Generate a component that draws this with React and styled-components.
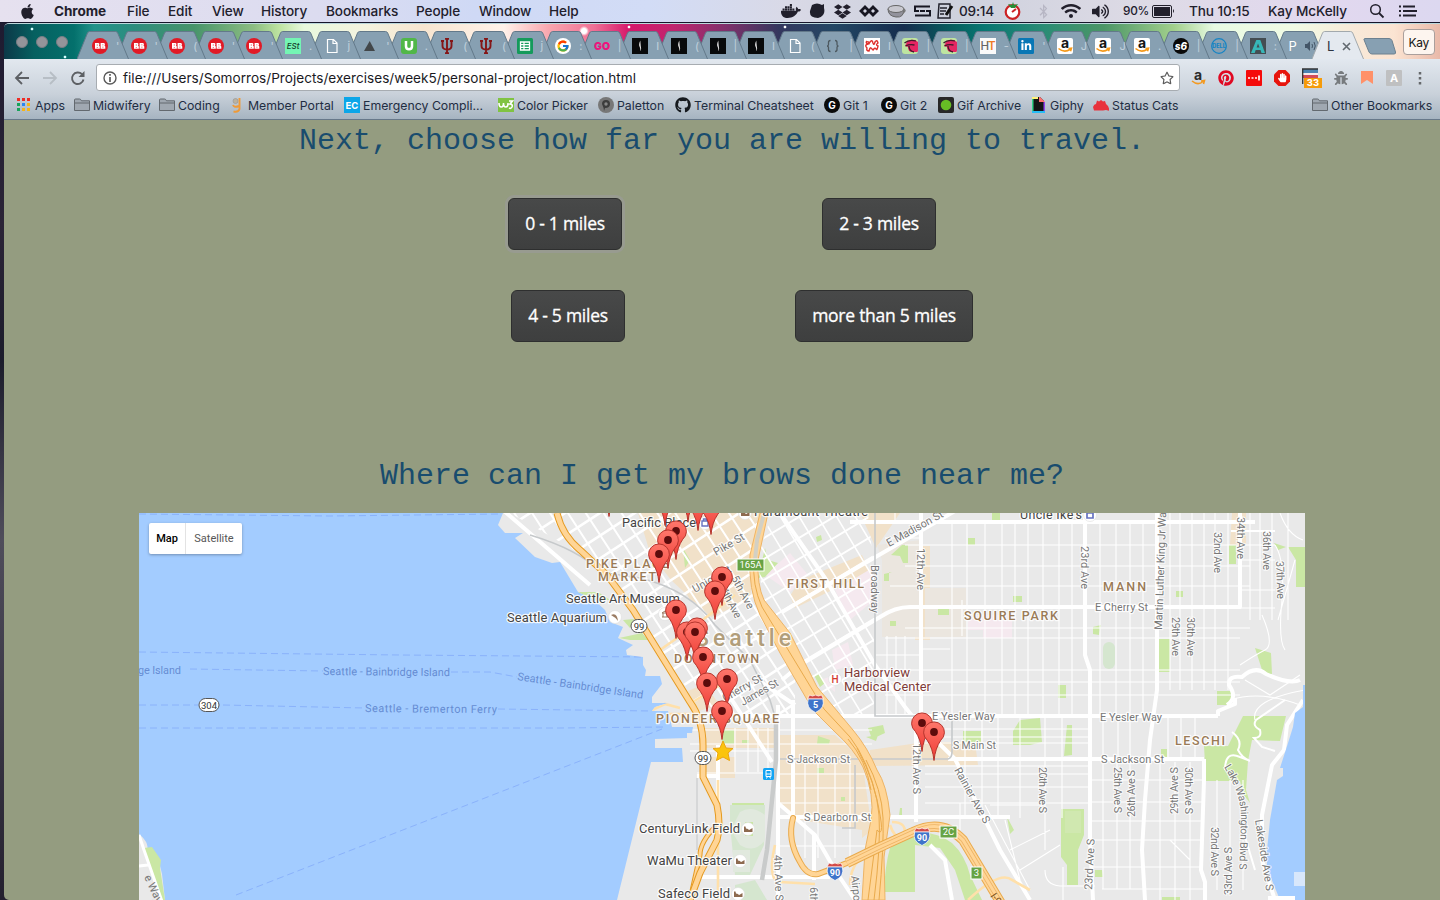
import React from "react";
import styled, { createGlobalStyle } from "styled-components";
import {
  FaApple, FaDocker, FaDropbox, FaWifi, FaBluetoothB, FaGithub,
  FaPinterest, FaHandPaper, FaBug, FaVolumeUp, FaRegStar, FaLinkedinIn,
} from "react-icons/fa";
import { FcGoogle } from "react-icons/fc";

const GlobalStyle = createGlobalStyle`
  * { box-sizing: border-box; }
  html, body { margin: 0; height: 100%; overflow: hidden; }
  body { font-family: Inter, "Liberation Sans", sans-serif; background: #231d33; }
  #root { height: 100%; }
  svg { display: block; flex: none; }
`;

const Desktop = styled.div`
  height: 900px;
  width: 1440px;
  display: flex;
  flex-direction: column;
  overflow: hidden;
  background: linear-gradient(#1d1a30, #2b2437 25%, #1c1c2c 40%, #4f4d5b 60%, #24202f);
`;

/* ---------- system menu bar ---------- */

const MenuBar = styled.header`
  height: 23px;
  flex: none;
  display: flex;
  align-items: center;
  background: linear-gradient(90deg, #e6e1ef, #dcdcf0 22%, #cfd9f5 33%, #d2dcf6 45%, #d9d9e6 55%, #ccd0dc 65%, #dedbe6 80%, #e2d8ef 92%, #dcd8f0);
  border-bottom: 1px solid #17152a;
  color: #22202c;
  white-space: nowrap;
`;

const MenuItem = styled.span`
  flex: none;
  width: ${(p) => p.$w}px;
  padding-left: ${(p) => p.$pad || 0}px;
  display: flex;
  align-items: center;
  height: 22px;
  font-weight: ${(p) => (p.$bold ? 700 : 500)};
  font-size: ${(p) => p.$size || 13.6}px;
  letter-spacing: ${(p) => p.$ls || -0.1}px;
  color: ${(p) => p.$color || "inherit"};
`;

/* ---------- browser window ---------- */

const Window = styled.div`
  margin: 0 0 0 4px;
  flex: 1;
  min-height: 0;
  display: flex;
  flex-direction: column;
  border-radius: 5px 0 0 5px;
  overflow: hidden;
  border-top: 1px solid #bcd8dc;
`;

const TabStrip = styled.div`
  height: 35px;
  flex: none;
  display: flex;
  align-items: flex-end;
  background:
    radial-gradient(circle 3px at 28px 5px, #d8ffff 25%, transparent 60%),
    radial-gradient(circle 3px at 61px 33px, #d8ffff 25%, transparent 60%),
    radial-gradient(circle 5px at 580px 7px, #fff 50%, transparent 100%),
    radial-gradient(circle 3px at 625px 3px, #fff 25%, transparent 60%),
    radial-gradient(circle 3px at 781px 3px, #fff 25%, transparent 60%),
    linear-gradient(90deg, #0c3848 0, #066060 30px, #04706c 70px, #21938a 90px, #2d8d7e 130px, #47946a 190px, #8dbd82 250px, #bde3a0 275px, #e8f8dd 300px, #f4f3df 360px, #f7e5d0 420px, #fff2ea 500px, #f9a6ae 545px, #ef7095 590px, #d6186b 625px, #c0256e 670px, #82306c 720px, #34375e 775px, #234764 830px, #152d4e 900px, #06605f 950px, #077672 980px, #2a8c75 1040px, #4c9667 1100px, #a2cf8c 1170px, #e8fae3 1210px, #f1fbe5 1290px, #f8e9d8 1350px, #fbe4d2 1390px, #e9b9a9 1436px);
`;

const WindowDots = styled.div`
  width: 73px;
  height: 35px;
  flex: none;
  display: flex;
  align-items: center;
  gap: 8px;
  padding: 0 0 0 12px;
`;

const Dot = styled.span`
  width: 12px;
  height: 12px;
  border-radius: 50%;
  background: #94949a;
  border: 1px solid #797d84;
`;

const Tab = styled.div`
  width: 52px;
  height: 28px;
  flex: none;
  margin-right: -13.42px;
  position: relative;
  z-index: ${(p) => p.$z};
  display: grid;
  > * { grid-area: 1 / 1; }
`;

const TabBody = styled.div`
  display: flex;
  align-items: center;
  gap: 8px;
  padding: 2px 0 0 15px;
`;

const TabHint = styled.span`
  font-size: 11px;
  color: #dbe5ee;
  opacity: 0.7;
  white-space: nowrap;
`;

const TabText = styled.span`
  font-size: 13px;
  color: ${(p) => (p.$active ? "#2b3340" : "#fff")};
`;

const NewTab = styled.div`
  width: 52px;
  height: 28px;
  flex: none;
  padding: 7px 0 0 12px;
`;

const ProfileButton = styled.div`
  margin: 0 5px 4px auto;
  width: 35px;
  height: 26px;
  display: flex;
  align-items: center;
  justify-content: center;
  border: 1px solid #aa9f9c;
  border-radius: 4px;
  background: #fdf5ef;
  font-size: 12px;
  letter-spacing: -0.3px;
  color: #151515;
`;

const Toolbar = styled.div`
  height: 35px;
  flex: none;
  display: flex;
  align-items: center;
  padding-top: 2px;
  background: linear-gradient(#e2e8ef, #c9d1da);
`;

const NavButtons = styled.div`
  width: 92px;
  display: flex;
  gap: 12px;
  padding-left: 10px;
`;

const AddressBar = styled.div`
  width: 1084px;
  height: 27px;
  flex: none;
  display: flex;
  align-items: center;
  padding: 0 5px 0 6px;
  gap: 6px;
  background: #fff;
  border: 1px solid #a7acb1;
  border-radius: 3px;
  color: #1a1a1f;
`;

const Url = styled.span`
  flex: 1;
  font-size: 13.6px;
  letter-spacing: 0.01px;
`;

const Extensions = styled.div`
  display: flex;
  align-items: center;
  gap: 12px;
  padding-left: 10px;
`;

const BookmarkBar = styled.div`
  height: 26px;
  flex: none;
  display: flex;
  align-items: center;
  padding: 0 0 3px 13px;
  background: linear-gradient(#c9d1da, #a6b4c1);
  border-bottom: 1px solid #67788a;
`;

const Bookmark = styled.span`
  flex: none;
  width: ${(p) => p.$w}px;
  margin-left: ${(p) => p.$ml || 0}px;
  display: flex;
  align-items: center;
  gap: ${(p) => p.$gap || 3}px;
  font-size: 12.3px;
  color: #1f2d42;
  white-space: nowrap;
`;

/* ---------- page ---------- */

const Page = styled.main`
  flex: 1;
  min-height: 0;
  background: #949c80;
  display: flex;
  flex-direction: column;
  align-items: center;
`;

const Heading = styled.h2`
  margin: ${(p) => p.$top}px 0 0;
  font: 400 30px/34px "Liberation Mono", monospace;
  color: #194c6e;
  white-space: pre;
`;

const ButtonRow = styled.div`
  margin-top: ${(p) => p.$top}px;
  display: flex;
  gap: ${(p) => p.$gap}px;
  width: 1436px;
  padding-left: ${(p) => p.$left}px;
`;

const MileButton = styled.button`
  width: ${(p) => p.$w}px;
  height: 52px;
  padding: 0 0 2px;
  border: 1px solid #2e2f2f;
  border-radius: 6px;
  background: linear-gradient(#484949, #3e3f3f);
  box-shadow: ${(p) => (p.$focused ? "0 0 0 3px rgba(155, 155, 155, 0.6)" : "none")};
  color: #fff;
  font: 500 17.5px "Open Sans", sans-serif;
  -webkit-text-stroke: 0.3px #fff;
  letter-spacing: -0.25px;
`;

const MapFrame = styled.section`
  width: 1166px;
  height: 387px;
  margin-top: 20px;
  display: grid;
  overflow: hidden;
  > * { grid-area: 1 / 1; }
`;

const MapTypeControl = styled.div`
  align-self: start;
  justify-self: start;
  margin: 10px;
  height: 31px;
  display: flex;
  z-index: 1;
  background: #fff;
  border-radius: 2px;
  box-shadow: 0 1px 3px rgba(0, 0, 0, 0.3);
  font: 11px/31px Roboto, sans-serif;
`;

const MapType = styled.span`
  width: ${(p) => p.$w}px;
  text-align: center;
  font-weight: ${(p) => (p.$active ? 500 : 400)};
  color: ${(p) => (p.$active ? "#000" : "#565656")};
  border-left: ${(p) => (p.$active ? "none" : "1px solid #e3e3e3")};
`;

/* ---------- icons ---------- */

const T = ({ children, x = 8, y = 12, s = 10, c = "#fff", w = 700, f = "Inter", ...r }) => (
  <text x={x} y={y} fontSize={s} fill={c} fontWeight={w} fontFamily={f} textAnchor="middle" {...r}>{children}</text>
);
const Ico = ({ children, w = 16, h = 16 }) => (
  <svg width={w} height={h} viewBox={`0 0 ${w} ${h}`}>{children}</svg>
);

const favicons = {
  rb: (
    <Ico><circle cx="8" cy="8" r="8" fill="#e11a26" />
      <path d="M3 5h3.4q1.3.3 1 1.6l-.4.9.8 1v2.3H3zM8.6 5H12q1.3.4.9 1.8l-.4.7.8 1v2.3H8.6z" fill="#fff" />
      <path d="M4.8 6.5h.9v1h-.9zM4.8 9h.9v.8h-.9zM10.4 6.5h.9v.8h-.9zM10.4 8.8h1v.8h-1z" fill="#e11a26" /></Ico>
  ),
  est: (
    <Ico><path d="M0 0h16v16H0z" fill="#74f5b4" /><T s={8} w={500} y={11} c="#173d2b" fontStyle="italic">ESt</T></Ico>
  ),
  file: (
    <Ico><path d="M3.500 1.500h6l3.500 3.500v9.500h-9.500zM9 1.800v3.700h3.800" fill="none" stroke="#fff" strokeWidth="1.200" /></Ico>
  ),
  tri: <Ico><path d="M2 13L7.700 3L13 13z" fill="#42474a" /></Ico>,
  u: <Ico><rect width="16" height="16" rx="3" fill="#51b748" /><path d="M5 3v5.300q0 3 3 3t3-3V3" stroke="#fff" strokeWidth="2.500" fill="none" /></Ico>,
  iu: <Ico><path d="M2 3h3M11 3h3M8 0v16M6 .8h4M6 15.200h4M3.500 3v5q0 3.500 4.500 3.500t4.500-3.500V3" stroke="#841617" strokeWidth="1.900" fill="none" /></Ico>,
  sheets: <Ico><rect width="16" height="16" rx="1.500" fill="#149a5b" /><path d="M3.500 4h9v8h-9zM3.500 6.700h9M3.500 9.300h9M7 4v8" fill="none" stroke="#fff" strokeWidth="1.300" /></Ico>,
  google: <Ico><circle cx="8" cy="8" r="8" fill="#fff" /><g transform="translate(1.300 1.300)"><FcGoogle size={13.400} /></g></Ico>,
  go: <Ico><T s={10.500} w={900} c="#ee147d">GO</T></Ico>,
  black: <Ico><path d="M0 0h16v16H0z" fill="#080a0b" /><path d="M8.300 2.500q-2 4-.6 6.500t.2 4.500q2-3 .8-6z" fill="#e8e8e8" /></Ico>,
  braces: <Ico><path d="M5.500 2.500q-2 0-2 2v2q0 1.500-1.500 1.500 1.500 0 1.500 1.500v2q0 2 2 2M10 2.500q2 0 2 2v2q0 1.500 1.500 1.500-1.500 0-1.500 1.500v2q0 2-2 2" fill="none" stroke="#4d5960" strokeWidth="1.300" /></Ico>,
  squig: <Ico><path d="M0 0h16v16H0z" fill="#fff" /><path d="M3 3q-2 2 1 3-4 1-1 4-1 3 2 3 1-4 2-3t2 2q2-3 3-1t2-3q-3-1 0-3-1-4-3-1-1 4-2 1-1-4-3-1t-2-1" fill="none" stroke="#df312d" strokeWidth="1.400" /></Ico>,
  pink: <Ico><rect width="16" height="16" rx="3" fill="#bee5a0" /><path d="M13 2Q6 1 4 6l-1 2 3 1q0 5 4 5h5q1 0 1-2V4z" fill="#e52663" /><path d="M2.500 5Q7 1 14 3M3.500 8q4-2 9-1M7 8q0 5 5 6" fill="none" stroke="#411b2b" strokeWidth="1.300" /></Ico>,
  ht: <Ico><path d="M0 0h16v16H0z" fill="#fafafa" /><T x={4.800} s={11.500} w={500} c="#666">H</T><T x={11.800} s={11.500} w={600} c="#ee7a29">T</T></Ico>,
  li: <Ico><rect width="16" height="16" rx="1.500" fill="#0877b5" /><g transform="translate(2.500 2)"><FaLinkedinIn size={11.500} color="#fff" /></g></Ico>,
  amazon: <Ico><rect width="16" height="16" rx="2" fill="#fff" /><T s={14} y={10} c="#151515">a</T><path d="M1.500 10.500q6 5 12 .5M11.500 10.500l3-.3-1 3" stroke="#f59a1b" strokeWidth="1.600" fill="none" /></Ico>,
  s6: <Ico><circle cx="8" cy="8" r="8" fill="#090909" /><T s={10} w={800} fontStyle="italic">s6</T></Ico>,
  dell: <Ico><circle cx="8" cy="8" r="7.300" fill="none" stroke="#1684c4" strokeWidth="1.300" /><T s={5.500} y={10} c="#1684c4" w={800}>DELL</T></Ico>,
  a: <Ico><path d="M0 0h16v16H0z" fill="#444d52" /><path d="M1 15L6.300 2h4L15 15h-3.500l-1-3H5.700l-1 3zM8 5.500L6.600 9.500h3z" fill="#37b6b7" /></Ico>,
};

const tabs = [
  "rb", "rb", "rb", "rb", "rb", "est", "file", "tri", "u", "iu", "iu", "sheets", "google", "go",
  "black", "black", "black", "black", "file", "braces", "squig", "pink", "pink", "ht", "li",
  "amazon", "amazon", "amazon", "s6", "dell", "a",
];
const hints = ["'", "'", "(", "'", "'", ".", "j", "'", ".", "(", "(", "j", ":", "|", "I", "(", "|", "I", "(", "|", "I", "|", "|", "-", "'", "J", "J", ".", "|", "|", ":"];

const TabShape = ({ active }) => (
  <svg width="52" height="28" viewBox="0 0 52 28">
    <path d="M0 28L10.500 2Q11.300.5 12.500.5H38.500Q40 .5 40.700 2L51.500 28" fill={active ? "#e4e9ef" : "#87a0b2"} stroke={active ? "#a2a9ad" : "#63798a"} strokeWidth="1" />
  </svg>
);

const Folder = () => (
  <Ico><path d="M.5 13.500V3q0-1 1-1h4q1 0 1.500 1l.5.800h8v9.700zM.8 6h14.700" fill="#a0a8b1" stroke="#63696f" /></Ico>
);
const AppsIcon = () => (
  <Ico w={13} h={14}>
    {["#ee2c24", "#ee2c24", "#ee2c24", "#17a35b", "#2a86f0", "#f5b417", "#17a35b", "#f5b417", "#f5b417"].map((c, i) => (
      <rect key={i} x={(i % 3) * 5} y={Math.floor(i / 3) * 5} width="3" height="3" fill={c} />
    ))}
  </Ico>
);
const GBadge = () => <Ico><circle cx="8" cy="8" r="8" fill="#0b0b0b" /><T s={10} y={11.600}>G</T></Ico>;

const bookmarks = [
  { w: 57, t: "Apps", gap: 5, i: <AppsIcon /> },
  { w: 85, t: "Midwifery", i: <Folder /> },
  { w: 73, t: "Coding", i: <Folder /> },
  { w: 112, t: "Member Portal", gap: 7, i: <Ico w={9}><circle cx="3.500" cy="4" r="2.500" fill="#bbb2a0" stroke="#999" strokeWidth=".7" /><path d="M7.500 1v11q-1 3.500-6 2.500M1 8q1 3 6 1" stroke="#ef9a37" strokeWidth="1.900" fill="none" /></Ico> },
  { w: 154, t: "Emergency Compli...", i: <Ico><path d="M0 0h16v16H0z" fill="#0ca6e8" /><T s={9.500} y={11.500}>EC</T></Ico> },
  { w: 100, t: "Color Picker", i: <Ico><rect y="1" width="16" height="14" fill="#80c342" /><path d="M1 6q0 4 2.300 4T5.500 6q0 4 2.300 4T10 6M11 4h3.500L12 7q3 0 2 3-1 2-3 1" fill="none" stroke="#fff" strokeWidth="1.600" /></Ico> },
  { w: 77, t: "Paletton", i: <Ico><circle cx="8" cy="8" r="8" fill="#777" /><path d="M8 3q4 0 4 4t-5 4l-1 3q0-3-2-7 0-4 4-4z" fill="#3c3c3c" /><circle cx="8" cy="7" r="1.700" fill="#888" /></Ico> },
  { w: 149, t: "Terminal Cheatsheet", i: <FaGithub size={16} color="#161a1e" /> },
  { w: 57, t: "Git 1", i: <GBadge /> },
  { w: 57, t: "Git 2", i: <GBadge /> },
  { w: 94, t: "Gif Archive", i: <Ico><rect width="16" height="16" rx="2" fill="#282828" /><circle cx="8" cy="8" r="5.300" fill="#67bd25" /></Ico> },
  { w: 61, t: "Giphy", gap: 5, i: <Ico w={13}><path d="M1 0h7l4 4v11H1z" fill="#151515" /><path d="M0 0h6v2H0z" fill="#fff279" /><path d="M0 2h1.500v12H0z" fill="#31d287" /><path d="M7 0h1l5 5H7z" fill="#ff7070" /><path d="M11.500 5h1.500v9h-1.500z" fill="#9142ee" /><path d="M0 14h13v2H0z" fill="#26bcf5" /></Ico> },
  { w: 90, t: "Status Cats", i: <Ico><path d="M0 10q1-3 3-3l1-3.500 2 1 2-1.500 2 1.500 2-.5 1 3 2 2 2 5-4-1-3 .5H1z" fill="#e8323c" /></Ico> },
];

/* ---------- map drawing ---------- */

const LAND = "M503 513L498 525L505 533H523L515 538L535 557L552 563L560 562L578 592L593 599L605 610L610 622L623 627L618 638L633 645L626 650L627 655L643 657V665L646 670L645 676H660L662 684L652 697V703H668L655 707L652 711H668L672 727H693L692 733H687V738L655 739V748H682L683 762H651L617 900H1305V513Z";

const hLines = (ys, x1, x2) => ys.map((y) => `M${x1} ${y}H${x2}`).join("");
const vLines = (xs, y1, y2) => xs.map((x) => `M${x} ${y1}V${y2}`).join("");
const range = (a, b, s) => Array.from({ length: Math.floor((b - a) / s) + 1 }, (_, i) => a + i * s);

const minor = [
  hLines([545, 566, 586, 628], 905, 1250),
  hLines([638, 670, 682, 695], 885, 1240),
  hLines([655], 876, 921), hLines([649], 921, 950),
  hLines([729, 737, 743], 925, 1090),
  hLines([766, 774, 787, 803], 925, 1090),
  hLines([780, 802, 821, 840, 867], 1091, 1203),
  hLines([889], 1102, 1205),
  vLines([952, 967, 985, 1002, 1015, 1028, 1043, 1059, 1072], 524, 716),
  vLines([896, 905, 887], 636, 716),
  vLines([965, 982, 998, 1020, 1045, 1062], 716, 818),
  vLines([1100, 1116, 1130, 1143], 524, 716),
  vLines([1170, 1180, 1192, 1204, 1215, 1228], 513, 690),
  vLines([1103, 1117, 1130], 762, 889),
  vLines([1160, 1175, 1190], 762, 900),
  vLines([1217, 1230, 1243], 780, 890),
  vLines([1103, 1118, 1130, 1168, 1181, 1195], 718, 758),
  vLines([805, 818, 835, 850], 760, 858),
  hLines([730, 744, 774, 788, 803, 846], 780, 872),
  vLines([1250, 1260, 1272, 1288], 513, 620),
  hLines([545, 560, 590, 608], 1240, 1275),
  hLines([730, 744, 751], 690, 776), vLines([735, 748, 758, 768], 728, 772),
  hLines([773], 697, 776),
  "M895 513V522M940 513V522M1070 513V522M962 600V636M885 538H921M890 586H921M1280 513Q1288 535 1303 540M1275 545Q1285 560 1282 600Q1278 640 1285 650M1295 560L1278 620M1262 615Q1275 645 1265 650T1240 665M1245 680L1270 695L1300 675M1230 700Q1260 690 1300 705M1255 720Q1250 700 1305 690",
  "M1005 820L1020 880M985 805L1030 890M1010 850L1050 830M1020 870L1060 845M960 803V830M990 805H1045V850M1170 840L1190 860M1045 870Q1045 885 1060 886H1095M1063 867V900",
].join("");

const major = [
  hLines([522], 850, 1255), hLines([716], 735, 1218), "M1218 716V711L1235 704V698", hLines([759], 948, 1204), "M1204 759V780L1201 870L1205 882V900",
  hLines([817], 780, 1010), "M921 513V716M916 720V822",
  "M1240 513V607H910Q895 607 880 617L800 665L782 680",
  "M1085 513V655L1090 670V840L1093 900M1157 513V690L1150 740L1145 800L1142 850L1145 900",
  "M955 511L860 566L782 612", "M780 513L825 578L875 665L905 707L917 722L955 759L1000 850L1030 900",
  "M793 700V820M718 745V810M778 803L815 835L835 870L855 900M778 705V900M700 877H830",
  "M732 700L772 762M755 678L795 705M697 776H720",
  "M930 845L945 860L952 900M814 833V880",
].join("");

const SR99 = "M557 513Q562 535 580 550L607 575L633 610L690 702Q703 720 703 745V777L717 805Q721 825 717 840L700 873L690 900";
const I5 = "M760 513L750 555Q748 590 760 615L780 653L813 710L833 730Q855 750 863 767Q875 795 871 820L865 850L862 900H885L884 857L890 815Q887 785 877 770Q868 748 853 730L817 687L790 633L764 600Q757 585 758 560L768 513Z";
const I5_LANES = "M764 513L754 560Q752 585 762 607L787 648L824 709L850 737Q868 760 877 800T877 830L868 900M857 748Q877 785 879 815T874 900M866 760Q882 790 883 818T879 900M848 739Q866 760 871 790";
const I90 = "M847 863L880 847L913 832Q942 818 963 840L975 860L1002 905";

const BROWN = "#9a7a56";
/* text, x, y, length, size, colour, weight */
const labels = [
  ["Pacific Place", 622, 527, 74, 12.8, "#444"], ["Paramount Theatre", 754, 516, 114, 12.800, "#444"], ["Uncle Ike's", 1020, 519, 62, 12.500, "#444"],
  ["Seattle Art Museum", 566, 603, 114, 13, "#444"], ["Seattle Aquarium", 507, 621.500, 100, 13, "#444"],
  ["CenturyLink Field", 639, 833, 101, 13, "#444"], ["WaMu Theater", 647, 865, 85, 13, "#444"], ["Safeco Field", 658, 898, 72, 13, "#444"],
  ["Harborview", 844, 677, 66, 13, "#7f3b38"], ["Medical Center", 844, 690.500, 87, 13, "#7f3b38"],
  ["PIKE PLACE", 586, 568, 83, 12.500, BROWN, 500], ["MARKET", 598, 581, 58, 12.500, BROWN, 500],
  ["FIRST HILL", 787, 588, 77, 12.500, BROWN, 500], ["SQUIRE PARK", 964, 620, 94, 12.500, BROWN, 500], ["MANN", 1103, 590.500, 43, 12.500, BROWN, 500],
  ["LESCHI", 1175, 744.500, 50, 12.500, BROWN, 500], ["DOWNTOWN", 674, 663, 85, 12.500, BROWN, 500], ["PIONEER SQUARE", 656, 723, 123, 12.500, BROWN, 500],
  ["Seattle", 695, 646, 96, 23, "#b19e7b", 500],
  ["E Cherry St", 1095, 611, 53, 11, "#777"], ["E Yesler Way", 932, 720, 63, 11, "#777"], ["E Yesler Way", 1100, 720.500, 62, 11, "#777"],
  ["S Main St", 953, 748.500, 43, 10.500, "#777"], ["S Jackson St", 787, 763, 63, 11, "#777"], ["S Jackson St", 1101, 762.500, 63, 11, "#777"], ["S Dearborn St", 804, 821, 67, 11, "#777"],
];
/* text, x, y, angle, length */
const turned = [
  ["12th Ave", 917, 548, 90, 42], ["Broadway", 871, 565, 90, 48], ["23rd Ave", 1081, 546, 90, 43], ["32nd Ave", 1214, 532, 90, 41],
  ["34th Ave", 1237, 517, 90, 42], ["36th Ave", 1263, 531, 90, 39], ["37th Ave", 1276, 561, 88, 38], ["29th Ave", 1172, 617, 90, 39], ["30th Ave", 1187, 617, 90, 39],
  ["Martin Luther King Jr Wa", 1162, 630, -88, 118], ["12th Ave S", 913, 743, 90, 51], ["Rainier Ave S", 954, 770, 61, 62], ["20th Ave S", 1039, 767, 90, 46],
  ["25th Ave S", 1114, 767, 90, 46], ["26th Ave S", 1135, 817, -90, 47], ["29th Ave S", 1178, 814, -90, 47], ["30th Ave S", 1185, 767, 90, 47],
  ["32nd Ave S", 1211, 827, 90, 49], ["33rd Ave S", 1232, 895, -90, 48], ["23rd Ave S", 1092, 890, -87, 51], ["Lakeside Ave S", 1255, 820, 81, 72],
  ["4th Ave S", 774, 855, 88, 46], ["6th Ave S", 810, 887, 90, 46], ["Airport Way", 851, 876, 84, 56],
  ["E Madison St", 889, 547, -29, 63], ["Pike St", 716, 556, -30, 34], ["Union St", 695, 593, -30, 43], ["5th Ave", 731, 578, 62, 36], ["4th Ave", 720, 590, 62, 33],
  ["Cherry St", 725, 702, -30, 44], ["James St", 743, 706, -30, 42],
];
const ferryLabels = [
  ["ge Island", 138, 674, 0, 43], ["Seattle - Bainbridge Island", 323, 675, 0.5, 127], ["Seattle - Bremerton Ferry", 365, 712, 0.5, 132], ["Seattle - Bainbridge Island", 517, 680, 8.5, 127],
];
const pins = [
  [609, 488], [665, 497], [688, 493], [698, 502], [711, 506], [676, 531], [668, 540], [659, 554], [722, 577], [715, 591], [676, 610],
  [687, 632], [697, 628], [695, 632], [703, 657], [727, 679], [707, 683], [722, 711], [922, 723], [934, 732],
];

const Pin = ({ x, y }) => (
  <g transform={`translate(${x} ${y})`}>
    <path d="M0 28.500Q-1.300 16-6.800 8.200A10.400 10.400 0 1 1 6.800 8.200Q1.300 16 0 28.500z" fill="url(#pinFill)" stroke="#b5342c" strokeWidth="1" />
    <circle r="3.900" fill="#5c0c0c" />
  </g>
);
const Oval = ({ x, y, t, w = 16 }) => (
  <g><rect x={x - w / 2} y={y - 6.500} width={w} height="13" rx="6.500" fill="#fff" stroke="#555" />
    <T x={x} y={y + 3.500} s={9.500} w={400} c="#333" f="Roboto">{t}</T></g>
);
const Interstate = ({ x, y, t }) => (
  <g transform={`translate(${x} ${y})`}>
    <path d="M-6-8L-3-7 0-8 3-7 6-8 8-4H-8z" fill="#d34b48" stroke="#fff" strokeWidth=".7" />
    <path d="M-7.300-4H7.300Q10 5 0 9.500Q-10 5-7.300-4z" fill="#3f74ca" stroke="#fff" strokeWidth=".7" />
    <T x={0} y={4.500} s={9} w={700} f="Roboto">{t}</T>
  </g>
);
const Exit = ({ x, y, w, t }) => (
  <g><rect x={x} y={y} width={w} height="12" fill="#67a344" stroke="#fff" strokeWidth="1" /><T x={x + w / 2} y={y + 9.300} s={9.500} w={400} f="Roboto">{t}</T></g>
);
const Poi = ({ x, y, children }) => (
  <g transform={`translate(${x} ${y})`}>
    <circle r="6.500" fill="#fff" stroke="#ddd" strokeWidth=".6" />
    {children || <path d="M-4-2.500V3H4.500V-1L2 .5Q1 1.500 0 0L-2-.5L-2.500-2.500z" fill="#8d6a4f" />}
  </g>
);
const Highway = ({ d, w, edge = "#e9aa4c", lanes = [] }) => (
  <g fill="none">
    <path d={d} stroke={edge} strokeWidth={w} /><path d={d} stroke="#ffd596" strokeWidth={w - 2} />
    {lanes.map((l) => <g key={l}><path d={d} stroke="#edb466" strokeWidth={l + 1.6} /><path d={d} stroke="#ffd596" strokeWidth={l} /></g>)}
  </g>
);

const CityMap = () => (
  <svg width="1166" height="387" viewBox="139 513 1166 387" fontFamily="Roboto, sans-serif">
    <defs>
      <linearGradient id="pinFill" x1="0" y1="0" x2="0" y2="1"><stop offset="0" stopColor="#ff776b" /><stop offset="1" stopColor="#ee3c35" /></linearGradient>
      <clipPath id="land"><path d={LAND} /></clipPath>
      <clipPath id="north"><path d="M510 513H760Q748 560 755 605L795 680L795 714H735L700 716L688 690L600 565Z" /></clipPath>
      <clipPath id="hill"><path d="M772 513H868L874 570V716H826L764 600L757 560Z" /></clipPath>
    </defs>
    <path d="M139 513H1305V900H139Z" fill="#a3ccff" />
    <g fill="none" stroke="#8ab2fb" strokeWidth="1" strokeDasharray="7 4">
      <path d="M139 514L330 516 500 514M139 652L400 655 650 657M190 669L323 671M451 672L490 672 517 677M139 705L198 705M223 705L365 708M498 709L652 711M139 728H560L665 727M236 895L662 729" />
    </g>
    <path d={LAND} fill="#e9e9e9" />
    <path d="M139 834Q152 845 145 853L158 858 162 874 165 900H139Z" fill="#e9e9e9" />
    <path d="M144 848L152 847 161 860 160 868 165 900H160Q155 880 144 852Z" fill="#cae7a4" />
    <path d="M139 835L144 850 165 910M139 866L148 865" stroke="#fff" strokeWidth="3" fill="none" />
    <g clipPath="url(#land)">
      <path d="M638 513H765L755 545 750 600 711 617 671 580 650 553ZM860 513H900L876 548ZM665 553L690 570 710 610 690 600ZM800 580L862 555 870 572 795 608 790 596ZM780 735H835L862 760 872 830 862 838V830L800 820 780 805ZM870 750L925 742H975L978 765 870 766ZM915 546H930V640H915ZM700 728H776V748H700ZM702 757H735V778H702ZM688 691L704 684 720 705 695 712ZM780 760H797V805H780ZM1232 513H1246V545H1230Z" fill="#f1e1c9" />
      <path d="M877 545L921 540V637H882V560ZM925 588H966V637H925Z" fill="#ebe6df" />
      <path d="M765 575L790 553 808 575 790 592ZM835 590L874 567V600L850 620ZM968 615H1012V638H983V630H968ZM832 650L848 642 853 665 835 670ZM820 680L835 675 835 692Z" fill="#f5e9ef" />
      <g fill="#cae7a4">
        <path d="M576 592H598L610 600H585ZM683 548L690 560 685 568ZM765 548L768 560 778 563 765 577 758 578ZM623 620L634 619 630 628ZM619 638L642 633 648 640H630ZM992 513H1000V520H992ZM968 538H975V545H968ZM891 555L902 545H908V563H903L900 556ZM892 572H889V581H884V574ZM1013 596H1022V602H1013ZM938 609H949V615H938ZM890 621H896V626H890ZM814 675L819 672 825 683 820 687ZM816 537L821 535 822 540 817 542Z" />
        <path d="M1156 639H1170V672H1156ZM1058 685H1066V698H1058ZM1176 591H1183V597H1176ZM1229 545H1236V564H1229ZM1288 547H1305V587H1296V560ZM1274 543L1286 547 1278 550ZM1255 648L1271 653 1272 674 1263 673ZM1217 691H1232L1235 700 1228 705H1217ZM1093 627L1101 625 1099 635 1093 634Z" />
        <path d="M1243 716H1286L1280 741 1252 740 1248 761 1246 790 1250 803 1243 794 1240 781H1206L1204 746H1228ZM1067 725H1072V755L1064 756ZM1061 809H1084V835L1078 850V885H1067V865L1061 857ZM1161 749H1167V757H1161ZM1095 870H1102L1103 877H1095ZM1162 897H1180V900H1162Z" />
        <path d="M868 728L883 725 885 733 872 739ZM866 737L878 735 876 741ZM818 736L830 740 829 744H817ZM963 731H981V742H963ZM1013 731L1020 720 1040 718 1042 742 1030 745H1013ZM900 808H902V816H899ZM817 768H824V773H817ZM841 797H845V801H841ZM722 730H734V744H722ZM742 740H749V743H742Z" />
        <path d="M890 848L912 835Q930 828 952 843Q965 855 970 875L982 900H965L955 870 940 848 915 845V892H884Q885 865 890 848ZM1007 817L1014 830 1010 834ZM732 803H764V820H732Z" />
      </g>
      <path d="M730 805H765L764 845 750 875H735L730 825ZM735 885L755 880 767 900H735Z" fill="#d5e6cf" />
      <path d="M740 812Q752 805 765 815V840Q755 854 740 845L731 830ZM733 850H750V872H733Z" fill="#e1e9de" /><path d="M745 822H753V836H745Z" fill="#cae7a4" />
      <rect x="1103" y="642" width="12" height="27" rx="6" fill="#d5e6cf" />
      <path d="M1065 811H1081V833H1065Z" fill="#d0e8b0" />
      <g stroke="#fff" fill="none">
        <g clipPath="url(#north)"><g transform="rotate(-33 690 600)">
          <path d={hLines(range(440, 800, 19), 480, 880)} strokeWidth="2.600" />
          <path d={vLines(range(500, 880, 15), 420, 820)} strokeWidth="2" />
        </g></g>
        <g clipPath="url(#hill)"><g transform="rotate(-31 810 620)">
          <path d={hLines(range(490, 760, 18), 700, 940)} strokeWidth="2" />
          <path d={vLines(range(710, 930, 16), 470, 780)} strokeWidth="1.600" />
        </g></g>
      </g>
      <path d={minor} stroke="#fff" strokeWidth="1.100" fill="none" />
      <path d={major} stroke="#fff" strokeWidth="4" fill="none" strokeLinejoin="round" />
      <path d="M503 510L590 585M1303 700L1287 725 1284 750 1272 765 1262 815 1262 860 1275 900M1227 705Q1238 698 1229 685Q1228 675 1242 677Q1255 665 1266 674Q1290 685 1300 680" stroke="#fff" strokeWidth="4" fill="none" />
      <path d="M1231 531L1275 531M1232 732Q1243 740 1238 750 1242 758 1250 761M1225 770Q1225 750 1240 757L1248 760M1285 700L1256 720Q1252 726 1260 730 1262 738 1254 738L1262 747 1275 751M1255 870L1243 830" stroke="#fff" strokeWidth="2" fill="none" />
      <path d="M875 513V716H918M780 759H948Q952 758 952 752V720M855 765V828H842M530 535Q580 550 600 572L640 578Q690 590 715 625L750 660L770 700L776 720" stroke="#c6c9cb" strokeWidth="1.600" fill="none" />
      <path d="M776 720V760L767 850 762 880" stroke="#c9cbcb" strokeWidth="4.500" fill="none" />
      <path d="M697 778V850" stroke="#cfd1d2" strokeWidth="1.500" />
      <path d="M652 710L665 704 680 708M662 714H690M718 780V900M775 845Q769 870 775 880M780 882L815 884M968 900Q1000 870 1012 880L1030 890M865 855Q850 865 850 885M892 822Q908 822 904 836M890 825Q895 840 905 838M735 595L700 622 660 650M688 705L725 682" stroke="#ffe0aa" strokeWidth="2.600" fill="none" />
    </g>
    <Highway d="M716 826Q700 842 700 855L690 900" w={5} edge="#e59a20" />
    <Highway d={SR99} w={7} edge="#e59a20" />
    <path d="M793 818Q787 840 800 862Q807 876 818 874L847 863" fill="none" stroke="#e9aa4c" strokeWidth="6" strokeLinecap="round" />
    <path d="M793 818Q787 840 800 862Q807 876 818 874L847 863" fill="none" stroke="#ffd596" strokeWidth="4" strokeLinecap="round" />
    <path d={I5} fill="#ffd596" stroke="#edb466" />
    <path d={I5_LANES} fill="none" stroke="#e9aa4c" strokeWidth="1" />
    <Highway d={I90} w={10} lanes={[3]} />
    <path d="M764 514L757 540 754 570" stroke="#d3d0c4" strokeWidth="4" fill="none" />
    <path d="M1303 685H1305V900H1280L1267 868V850L1270 820 1277 780 1283 776V768H1280L1288 743 1293 727 1295 713 1303 707Z" fill="#a3ccff" />
    <path d="M1294 872H1305V886H1294Z" fill="#d8e7fb" />
    <path d="M1268 896H1295V900H1268Z" fill="#fff" />

    {ferryLabels.map(([t, x, y, a, w], i) => (
      <text key={i} transform={`translate(${x} ${y}) rotate(${a})`} textLength={w} fontSize="11" fill="#668cd3" stroke="#a3ccff" strokeWidth="2" paintOrder="stroke">{t}</text>
    ))}
    {turned.map(([t, x, y, a, w]) => (
      <text key={t + x} transform={`translate(${x} ${y}) rotate(${a})`} textLength={w} fontSize="11" fill="#777" stroke="#fff" strokeWidth="2" strokeOpacity=".8" paintOrder="stroke">{t}</text>
    ))}
    <path id="lakeBlvd" d="M1224 767Q1242 795 1241 820T1239 880" fill="none" />
    <text fontSize="10.500" fill="#777" stroke="#fff" strokeWidth="2" strokeOpacity=".8" paintOrder="stroke"><textPath href="#lakeBlvd" textLength="106">Lake Washington Blvd S</textPath></text>
    <text transform="translate(144 877) rotate(65)" fontSize="11" fill="#777">e Way</text>
    <text transform="translate(990 896) rotate(55)" fontSize="10" fill="#744b18">I-90</text>
    {labels.map(([t, x, y, w, s, c, wt]) => (
      <text key={t + x} x={x} y={y} textLength={w} fontSize={s} fill={c} fontWeight={wt || 400} stroke="#fff" strokeWidth="2.500" strokeOpacity=".85" paintOrder="stroke" strokeLinejoin="round">{t}</text>
    ))}
    <Oval x={209} y={705} t="304" w={20} />
    <Oval x={639} y={626} t="99" /><Oval x={703} y={758} t="99" />
    <Interstate x={815.500} y={703} t="5" /><Interstate x={922} y={836} t="90" /><Interstate x={835} y={871} t="90" />
    <Exit x={737} y={559} w={27} t="165A" /><Exit x={940} y={826} w={17} t="2C" /><Exit x={971} y={867} w={11} t="3" />
    <Poi x={748} y={829} /><Poi x={740} y={861} /><Poi x={738} y={894} /><Poi x={615} y={617}><path d="M-4-2Q2-5 3 4Q0 0-4-2z" fill="#9a7b62" /></Poi>
    <Poi x={835} y={679}><T x={0} y={3.500} s={10} w={500} c="#d33b31" f="Roboto">H</T></Poi>
    <Poi x={705} y={523}><path d="M-3-2H3V3H-3zM-1.500-2v-2h3v2" fill="none" stroke="#6572c1" strokeWidth="1.400" /></Poi>
    <Poi x={1090} y={515}><path d="M-3-2H3V3H-3z" fill="none" stroke="#6572c1" strokeWidth="1.700" /></Poi>
    <Poi x={745} y={513} />
    <Poi x={665} y={614}><path d="M-3-1L0-3 3-1zM-3 3H3M-2-1V3M2-1V3" stroke="#9a7b62" fill="none" /></Poi>
    <g transform="translate(763 768)"><rect width="11" height="12" rx="1.500" fill="#12a4f4" /><path d="M3 2.500H8V8.500H3zM3 6H8M3.500 10.500L4.500 8.500M7.500 10.500L6.500 8.500" stroke="#fff" fill="none" /></g>
    {pins.map(([x, y], i) => <Pin key={i} x={x} y={y} />)}
    <path d="M723 741L726 748 733 748.500 728 753 729.500 760.500 723 757 716.500 760.500 718 753 713 748.500 720 748Z" fill="#fbc40c" stroke="#eca40e" />
  </svg>
);

const menus = [["Chrome", 73], ["File", 41], ["Edit", 44], ["View", 49], ["History", 65], ["Bookmarks", 90], ["People", 63], ["Window", 70], ["Help", 232]];

export default function App() {
  return (
    <Desktop>
      <GlobalStyle />
      <MenuBar>
        <MenuItem $w={54} $pad={19}><FaApple size={17} /></MenuItem>
        {menus.map(([t, w], i) => <MenuItem key={t} $w={w} $bold={i === 0}>{t}</MenuItem>)}
        <MenuItem $w={28}><FaDocker size={20} /></MenuItem>
        <MenuItem $w={25}><Ico><path d="M3 2q5-3 10 0l2-1v4q2 8-6 10Q0 15 1 8z" fill="#20202b" /></Ico></MenuItem>
        <MenuItem $w={25}><FaDropbox size={17} /></MenuItem>
        <MenuItem $w={28}><Ico w={20} h={14}><path d="M10 7L6 3 2 7l4 4 8-8 4 4-4 4z" fill="none" stroke="#171722" strokeWidth="2.800" /></Ico></MenuItem>
        <MenuItem $w={27}><Ico w={19} h={14}><path d="M1 5q0 7 8 8t8-8" fill="#92929c" stroke="#666" /><ellipse cx="9" cy="5" rx="8" ry="3.500" fill="#c8c8cf" stroke="#666" /><path d="M16 5q4 1 0 4" fill="none" stroke="#777" strokeWidth="1.500" /></Ico></MenuItem>
        <MenuItem $w={23}><Ico w={17} h={12}><path d="M16 1.500H1v4.500h4M6 6h5M12 6h4v4.500H1" fill="none" stroke="#171722" strokeWidth="2" /></Ico></MenuItem>
        <MenuItem $w={22}><Ico w={17} h={16}><path d="M2 1h11v14H1zM3 5h7M3 8h6M3 11h4" fill="none" stroke="#22222d" strokeWidth="1.500" /><path d="M15 3l-6 9" stroke="#111" strokeWidth="3" /></Ico></MenuItem>
        <MenuItem $w={45} $ls={-0.2}>09:14</MenuItem>
        <MenuItem $w={32}><Ico w={17} h={18}><circle cx="8.500" cy="10" r="6.800" fill="#fff" stroke="#cc2225" strokeWidth="2.200" /><path d="M8 10l4-3" stroke="#cc2225" strokeWidth="2" /><path d="M4 2l4 1 1-3 1 3 4-1-3 4H7z" fill="#278e35" /></Ico></MenuItem>
        <MenuItem $w={25} $color="#b7b6c4"><FaBluetoothB size={15} /></MenuItem>
        <MenuItem $w={31}><FaWifi size={20} /></MenuItem>
        <MenuItem $w={31}><FaVolumeUp size={17} /></MenuItem>
        <MenuItem $w={29} $size={11.8} $ls={-0.3}>90%</MenuItem>
        <MenuItem $w={37}><Ico w={23} h={13}><rect x=".5" y=".5" width="19" height="12" rx="1.500" fill="none" stroke="#22202c" /><path d="M2 2h16v9H2z" fill="#22202c" /><path d="M21 4q2 2 0 4z" fill="#22202c" /></Ico></MenuItem>
        <MenuItem $w={79}>Thu 10:15</MenuItem>
        <MenuItem $w={101}>Kay McKelly</MenuItem>
        <MenuItem $w={30}><Ico><circle cx="6.500" cy="6.500" r="4.800" fill="none" stroke="#22202c" strokeWidth="1.500" /><path d="M10 10l4.500 4.500" stroke="#22202c" strokeWidth="1.800" /></Ico></MenuItem>
        <MenuItem $w={30}><Ico w={18} h={12}><path d="M0 1.500h2M4 1.500h12M0 6h2M4 6h14M0 10.500h2M4 10.500h13" stroke="#22202c" strokeWidth="1.800" /></Ico></MenuItem>
      </MenuBar>
      <Window>
        <TabStrip>
          <WindowDots><Dot /><Dot /><Dot /></WindowDots>
          {tabs.map((k, i) => (
            <Tab key={i} $z={40 - i}><TabShape /><TabBody>{favicons[k]}<TabHint>{hints[i]}</TabHint></TabBody></Tab>
          ))}
          <Tab $z={8}><TabShape /><TabBody><TabText>P</TabText><Ico w={11} h={10}><path d="M0 3h2l3-3v10L2 7H0z" fill="#435567" /><path d="M7 3q1 2 0 4M9 1q2.500 4 0 8" stroke="#435567" fill="none" /></Ico></TabBody></Tab>
          <Tab $z={41}><TabShape active /><TabBody><TabText $active>L</TabText><Ico w={9} h={9}><path d="M1 1l7 7M8 1L1 8" stroke="#62696f" strokeWidth="1.600" /></Ico></TabBody></Tab>
          <NewTab><Ico w={34} h={17}><path d="M2 .5H26Q28 .5 29 2.500L32.500 14Q33 16 31 16H9Q7 16 6 14L1.500 3Q0 .5 2 .5z" fill="#87a0b2" stroke="#6c8190" /></Ico></NewTab>
          <ProfileButton>Kay</ProfileButton>
        </TabStrip>
        <Toolbar>
          <NavButtons>
            <Ico><path d="M15 8H2M8 2L2 8l6 6" stroke="#5d6064" strokeWidth="1.800" fill="none" /></Ico>
            <Ico><path d="M1 8h13M8 2l6 6-6 6" stroke="#b7bec5" strokeWidth="1.800" fill="none" /></Ico>
            <Ico><path d="M13.500 9.500A5.800 5.800 0 1 1 12 4.200" stroke="#5d6064" strokeWidth="1.900" fill="none" /><path d="M14.500 1v6h-6z" fill="#5d6064" /></Ico>
          </NavButtons>
          <AddressBar>
            <Ico w={14} h={14}><circle cx="7" cy="7" r="6" fill="none" stroke="#5a5a5a" strokeWidth="1.400" /><path d="M7 6v5M7 3v1.700" stroke="#5a5a5a" strokeWidth="1.700" /></Ico>
            <Url>file:///Users/Somorros/Projects/exercises/week5/personal-project/location.html</Url>
            <FaRegStar size={14} color="#5c5c5c" />
          </AddressBar>
          <Extensions>
            <Ico><T s={14} y={10} c="#2b2b2b">a</T><path d="M2 11q6 5 11 .5M11 11l3.500-.5-1 3.500" stroke="#f39a22" strokeWidth="1.600" fill="none" /></Ico>
            <FaPinterest size={16} color="#e00923" />
            <Ico><rect width="16" height="16" rx="1" fill="#f50b0b" /><path d="M2 8h2M5.500 8h2M9 8h2M13 5.500v5" stroke="#fff" strokeWidth="1.700" /></Ico>
            <Ico><path d="M4.500 0h7L16 4.500v7L11.500 16h-7L0 11.500v-7z" fill="#e7150d" /><g transform="translate(3.500 3)"><FaHandPaper size={9.500} color="#fff" /></g></Ico>
            <Ico w={20} h={20}><path d="M0 1h16v4H0z" fill="#4b83b2" /><path d="M0 5h16v2H0z" fill="#f7e8ea" /><path d="M0 7h16v3H0z" fill="#d24b5a" /><path d="M.7 1v15M0 1h16" stroke="#333" strokeWidth="1.300" /><path d="M2 10h18v10H2z" fill="#f59b0b" /><T x={11} y={18.400} s={9.500}>33</T></Ico>
            <FaBug size={14} color="#777b7e" />
            <Ico w={14}><path d="M1 1h12v13l-6-4-6 4z" fill="#ff9169" /></Ico>
            <Ico><rect width="16" height="16" rx="1" fill="#bfc0c1" /><T s={11}>A</T></Ico>
            <Ico w={12}><path d="M6 2v2.500M6 7v2.500M6 12v2.500" stroke="#65686b" strokeWidth="2.500" /></Ico>
          </Extensions>
        </Toolbar>
        <BookmarkBar>
          {bookmarks.map((b) => <Bookmark key={b.t} $w={b.w} $gap={b.gap}>{b.i}{b.t}</Bookmark>)}
          <Bookmark $w={122} $ml={129}><Folder />Other Bookmarks</Bookmark>
        </BookmarkBar>
        <Page>
          <Heading $top={4}>Next, choose how far you are willing to travel.</Heading>
          <ButtonRow $top={40} $left={504} $gap={200}>
            <MileButton $w={114} $focused>0 - 1 miles</MileButton>
            <MileButton $w={114}>2 - 3 miles</MileButton>
          </ButtonRow>
          <ButtonRow $top={40} $left={507} $gap={170}>
            <MileButton $w={114}>4 - 5 miles</MileButton>
            <MileButton $w={178}>more than 5 miles</MileButton>
          </ButtonRow>
          <Heading $top={117}>Where can I get my brows done near me?</Heading>
          <MapFrame>
            <CityMap />
            <MapTypeControl><MapType $w={36} $active>Map</MapType><MapType $w={57}>Satellite</MapType></MapTypeControl>
          </MapFrame>
        </Page>
      </Window>
    </Desktop>
  );
}
